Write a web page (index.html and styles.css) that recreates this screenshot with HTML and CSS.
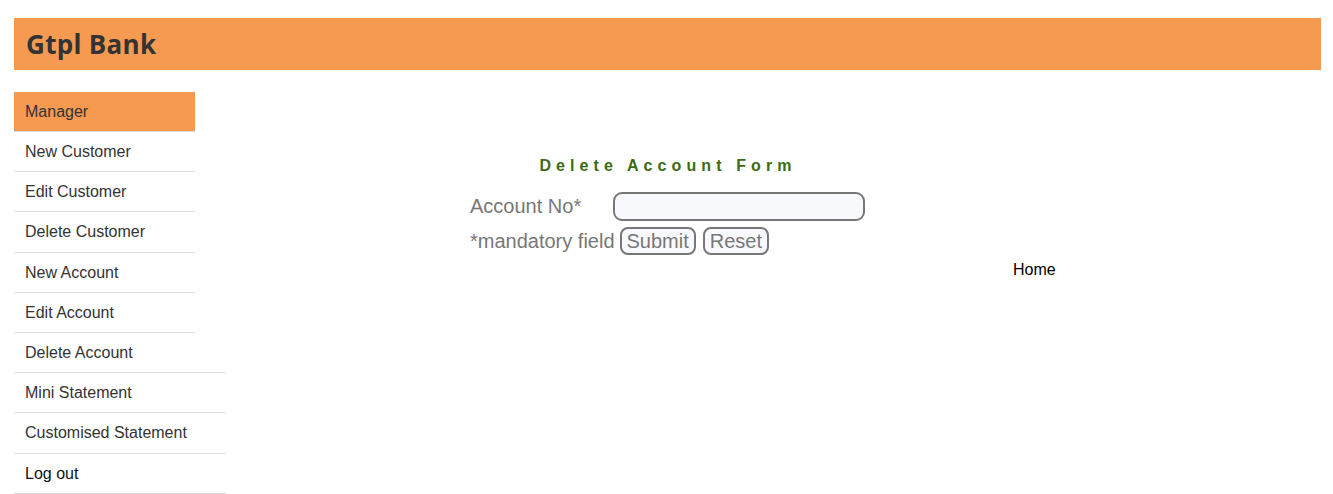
FILE: index.html
```html
<!DOCTYPE html>
<html>
<head>
<meta charset="utf-8">
<title>Gtpl Bank</title>
<link rel="stylesheet" href="styles.css">
</head>
<body>
<header class="topbar">
  <h2 class="brand">Gtpl Bank</h2>
</header>
<div class="layout">
  <nav class="sidebar">
    <ul class="menu">
      <li class="menu-item narrow active">Manager</li>
      <li class="menu-item narrow"><a href="#">New Customer</a></li>
      <li class="menu-item narrow"><a href="#">Edit Customer</a></li>
      <li class="menu-item narrow"><a href="#">Delete Customer</a></li>
      <li class="menu-item narrow"><a href="#">New Account</a></li>
      <li class="menu-item narrow"><a href="#">Edit Account</a></li>
      <li class="menu-item"><a href="#">Delete Account</a></li>
      <li class="menu-item"><a href="#">Mini Statement</a></li>
      <li class="menu-item"><a href="#">Customised Statement</a></li>
      <li class="menu-item logout"><a href="#">Log out</a></li>
    </ul>
  </nav>
  <main class="content">
    <form class="form-box">
      <p class="heading">Delete Account Form</p>
      <div class="row row-first">
        <label class="label">Account No*</label>
        <input class="field" type="text">
      </div>
      <div class="row row-actions">
        <span class="note">*mandatory field</span>
        <button class="btn" type="button">Submit</button>
        <button class="btn" type="button">Reset</button>
      </div>
    </form>
    <div class="home-row"><a href="#" class="home">Home</a></div>
  </main>
</div>
</body>
</html>
```
FILE: styles.css
```css
* { box-sizing: border-box; }
body {
  margin: 18px 12px 0 14px;
  font-family: "Liberation Sans", Arial, sans-serif;
  background: #fff;
}
.topbar {
  background: #f79a51;
  height: 52px;
  display: flex;
  align-items: center;
  padding-left: 12px;
}
.brand {
  margin: 0;
  font-family: "Open Sans", sans-serif;
  font-weight: 700;
  font-size: 26px;
  color: #333;
  letter-spacing: 0.3px;
}
.layout {
  display: flex;
  margin-top: 22px;
}
.sidebar { width: 212px; flex: none; }
.menu { list-style: none; margin: 0; padding: 0; }
.menu-item {
  width: 212px;
  padding: 10px 11px;
  line-height: 19.2px;
  font-size: 16px;
  color: #333;
  border-bottom: 1px solid #ddd;
}
.menu-item.narrow { width: 181px; }
.menu-item a { color: #333; text-decoration: none; }
.menu-item.active { background: #f79a51; height: 40px; padding-top: 10px; }
.menu-item.logout a { color: #111; }
.content { flex: 1; }
.form-box {
  margin-left: 244px;
  width: 392px;
}
.heading {
  margin: 64px 0 0;
  text-align: center;
  font-weight: 700;
  font-size: 16px;
  line-height: 20px;
  letter-spacing: 5.1px;
  color: #3d6b12;
  padding-left: 4px;
}
.row {
  display: flex;
  align-items: center;
  font-size: 20px;
  color: #777;
}
.row-first { margin-top: 15px; height: 30px; }
.label { width: 143px; flex: none; }
.field {
  width: 252px;
  height: 29px;
  border: 2px solid #777;
  border-radius: 9px;
  background: #f8f9fd;
  font-size: 18px;
  flex: none;
}
.row-actions { margin-top: 5px; height: 30px; }
.note { margin-right: 5px; }
.btn {
  font-family: "Liberation Sans", Arial, sans-serif;
  font-size: 20px;
  color: #777;
  background: #f8f9fd;
  border: 2px solid #777;
  border-radius: 8px;
  padding: 0 5px;
  height: 28px;
  line-height: 22px;
  margin-right: 7px;
}
.home-row { padding-left: 787px; margin-top: 5px; }
.home { color: #000; text-decoration: none; font-size: 16px; line-height: 18px; }
```
